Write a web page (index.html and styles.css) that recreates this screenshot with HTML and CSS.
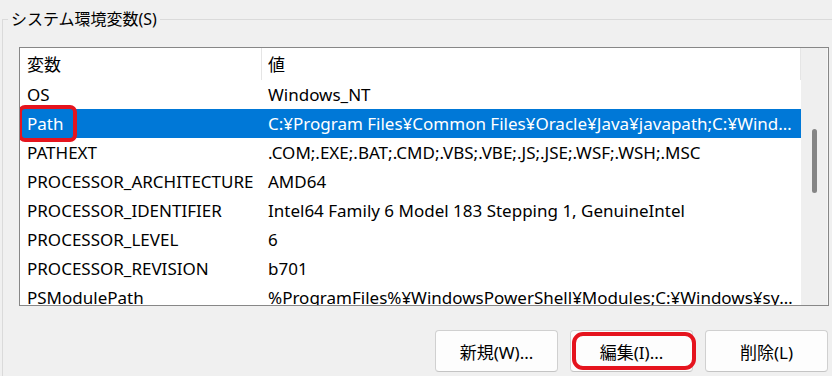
FILE: index.html
```html
<!DOCTYPE html>
<html lang="ja">
<head>
<meta charset="utf-8">
<title>システム環境変数</title>
<link rel="stylesheet" href="styles.css">
</head>
<body>
<fieldset class="group">
  <legend class="group-title">システム環境変数(S)</legend>
  <div class="list">
    <div class="list-body">
      <div class="list-head">
        <div class="hcell name">変数</div>
        <div class="hcell value">値</div>
      </div>
      <div class="row"><div class="cell name">OS</div><div class="cell value">Windows_NT</div></div>
      <div class="row selected"><div class="cell name marked">Path</div><div class="cell value">C:¥Program Files¥Common Files¥Oracle¥Java¥javapath;C:¥Windows¥system32;C:¥Windows;C:¥Windows¥System32¥Wbem</div></div>
      <div class="row"><div class="cell name">PATHEXT</div><div class="cell value">.COM;.EXE;.BAT;.CMD;.VBS;.VBE;.JS;.JSE;.WSF;.WSH;.MSC</div></div>
      <div class="row"><div class="cell name">PROCESSOR_ARCHITECTURE</div><div class="cell value">AMD64</div></div>
      <div class="row"><div class="cell name">PROCESSOR_IDENTIFIER</div><div class="cell value">Intel64 Family 6 Model 183 Stepping 1, GenuineIntel</div></div>
      <div class="row"><div class="cell name">PROCESSOR_LEVEL</div><div class="cell value">6</div></div>
      <div class="row"><div class="cell name">PROCESSOR_REVISION</div><div class="cell value">b701</div></div>
      <div class="row"><div class="cell name">PSModulePath</div><div class="cell value">%ProgramFiles%¥WindowsPowerShell¥Modules;C:¥Windows¥system32¥WindowsPowerShell¥v1.0¥Modules</div></div>
    </div>
    <div class="scrollbar"><div class="thumb"></div></div>
  </div>
  <div class="buttons">
    <button class="btn">新規(W)...</button>
    <button class="btn btn-marked">編集(I)...</button>
    <button class="btn">削除(L)</button>
  </div>
</fieldset>
</body>
</html>
```

FILE: styles.css
```css
html, body {
  margin: 0;
  padding: 0;
}
body {
  width: 832px;
  height: 376px;
  overflow: hidden;
  background: #f0f0f0;
  font-family: "Noto Sans", "Noto Sans CJK JP", sans-serif;
  font-size: 17px;
  color: #000;
}
.group {
  margin: 9px 0 0 2px;
  padding: 0 20px 20px 16px;
  width: 810px;
  border: 1px solid #dadada;
  border-right: none;
  border-bottom: none;
  min-width: 0;
}
.group-title {
  margin-left: -11px;
  padding: 0 3px;
  line-height: 20px;
  font-size: 16px;
}
.list {
  margin-top: 18px;
  height: 257px;
  border: 1px solid #878787;
  background: #fff;
  display: flex;
  overflow: hidden;
}
.list-body {
  width: 781px;
  flex: none;
}
.list-head {
  display: flex;
  height: 32px;
}
.hcell {
  line-height: 33px;
  white-space: nowrap;
}
.hcell.name {
  width: 234px;
  padding-left: 7px;
  border-right: 1px solid #e5e5e5;
}
.hcell.value {
  flex: 1;
  padding-left: 6px;
  border-right: 1px solid #e5e5e5;
}
.row {
  display: flex;
  height: 29px;
}
.cell {
  line-height: 30px;
  white-space: nowrap;
  overflow: hidden;
  text-overflow: ellipsis;
}
.cell.name {
  width: 235px;
  padding-left: 7px;
  flex: none;
  overflow: visible;
}
.cell.value {
  flex: 1;
  min-width: 0;
  padding-left: 6px;
  padding-right: 8px;
}
.row.selected {
  background: #0078d7;
  color: #fff;
}
.cell.marked {
  position: relative;
}
.cell.marked::after {
  content: "";
  position: absolute;
  left: -2px;
  top: -4px;
  width: 59px;
  height: 37px;
  box-sizing: border-box;
  border: 4px solid #e5141e;
  border-radius: 7px;
}
.scrollbar {
  flex: 1;
  background: #efefef;
  border-right: 1px solid #f7f7f7;
  padding: 81px 0 0 11px;
}
.thumb {
  width: 5px;
  height: 64px;
  border-radius: 3px;
  background: #858585;
}
.buttons {
  display: flex;
  justify-content: flex-end;
  gap: 12px;
  margin-top: 24px;
  margin-right: 1px;
}
.btn {
  width: 123px;
  height: 42px;
  border: 1px solid #d0d0d0;
  border-bottom-color: #c4c4c4;
  border-radius: 4px;
  background: #fdfdfd;
  font-family: "Noto Sans", "Noto Sans CJK JP", sans-serif;
  font-size: 17px;
  color: #000;
  padding: 0;
}
.btn-marked {
  position: relative;
}
.btn-marked::after {
  content: "";
  position: absolute;
  left: 1px;
  top: 1px;
  right: -4px;
  bottom: 1px;
  border: 4px solid #e5141e;
  border-radius: 11px;
}
```
